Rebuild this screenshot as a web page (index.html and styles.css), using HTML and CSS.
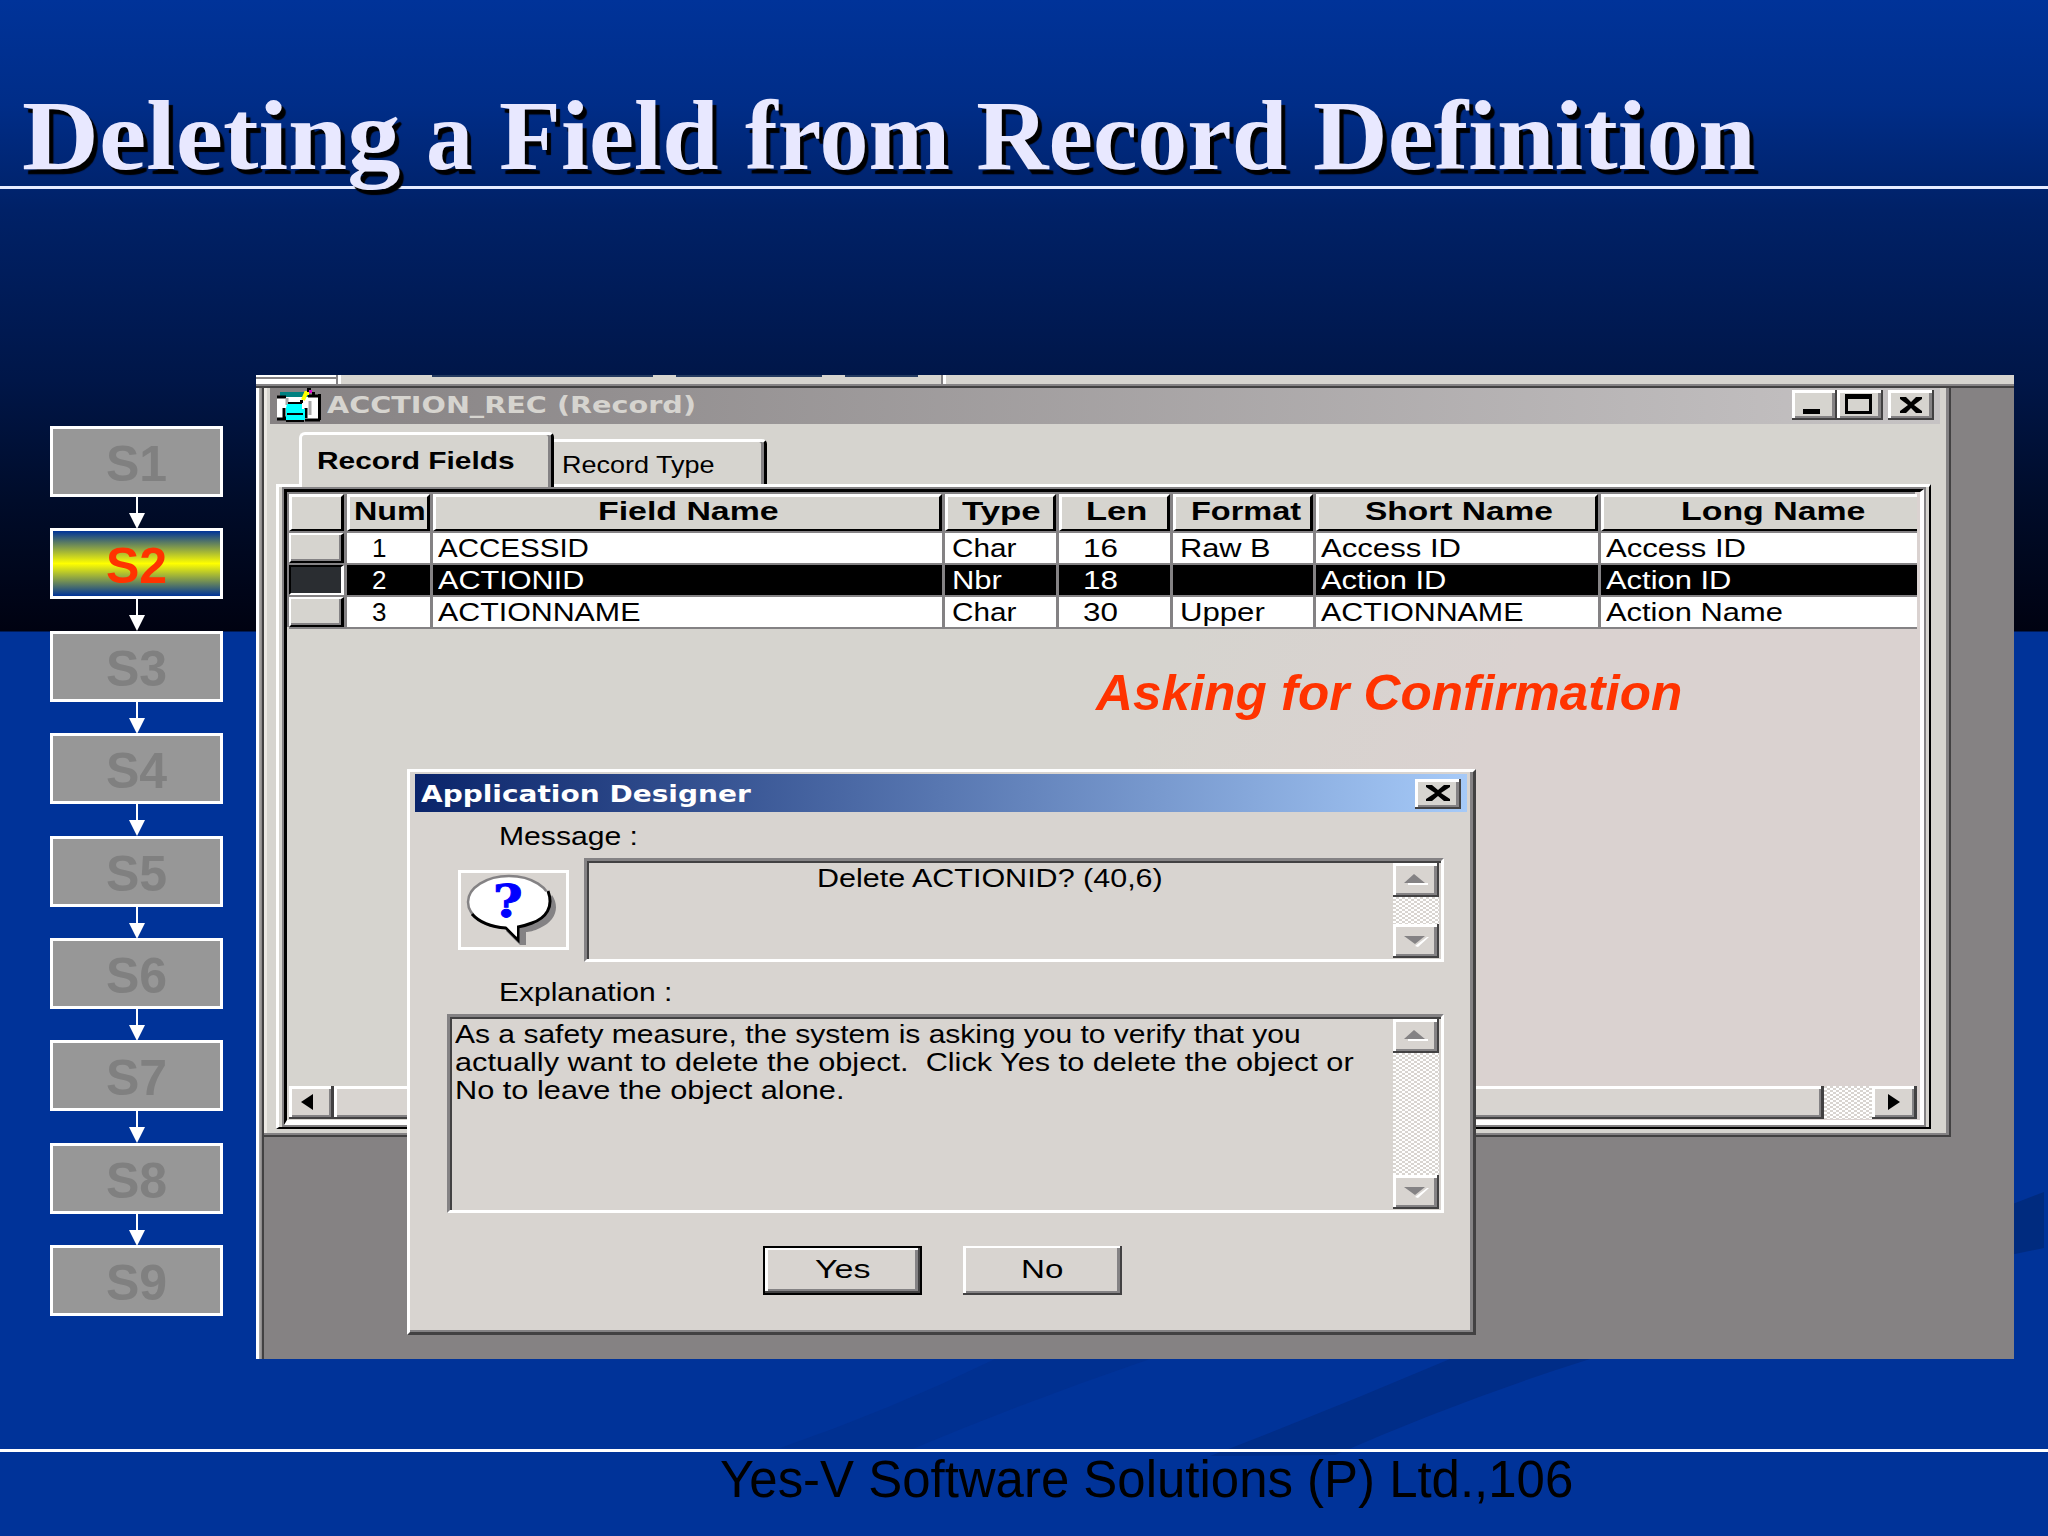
FILE: index.html
```
<!DOCTYPE html>
<html lang="en">
<head>
  <meta charset="utf-8">
  <title>Deleting a Field from Record Definition</title>
  <link rel="stylesheet" href="styles.css">
</head>
<body>
  <svg class="swoosh" width="2048" height="1536" viewBox="0 0 2048 1536">
    <path d="M2010 1205L2044 1192V1248L2010 1255Z" fill="#002b7f"/>
    <path d="M1450 1359H1590Q1460 1400 1335 1455L1210 1456Q1330 1410 1450 1359Z" fill="#002d88"/>
    <path d="M995 1359H1150Q1030 1400 910 1450L780 1448Q890 1410 995 1359Z" fill="#003091"/>
  </svg>

  <header class="slide-title">
    <h1>
      <span class="fit" data-w="378">Deleting</span>
      <span class="fit" data-w="47">a</span>
      <span class="fit" data-w="220">Field</span>
      <span class="fit" data-w="205">from</span>
      <span class="fit" data-w="311">Record</span>
      <span class="fit" data-w="443">Definition</span>
    </h1>
  </header>

  <main class="slide">
    <!-- step navigation -->
    <ol class="steps">
      <li>S1</li>
      <li class="current">S2</li>
      <li>S3</li>
      <li>S4</li>
      <li>S5</li>
      <li>S6</li>
      <li>S7</li>
      <li>S8</li>
      <li>S9</li>
    </ol>

    <section class="shot">
      <div class="strip">
        <i class="piece first"></i>
        <i class="piece second"><b></b><b></b><b></b></i>
        <i class="piece third"></i>
      </div>

      <!-- record window -->
      <div class="record">
        <div class="record-bar">
          <svg class="record-icon" width="45" height="34" viewBox="0 0 45 34">
            <path d="M1 9h43v23H1z" fill="#fff"/>
            <path d="M4 4h28v5H4z" fill="#008080"/>
            <path d="M1 9h9M32 8h11M43.500 6v26M29 32h15M1 31h10M8 20v10h4M30 20v10" stroke="#000" stroke-width="3" fill="none"/>
            <path d="M11 10v7M34 13v14" stroke="#aaa" stroke-width="3"/>
            <path d="M11 16h15v5h3v11H10V20z" fill="#00ffff"/>
            <path d="M11 26h16M10 33h18M12 15h14" stroke="#000" stroke-width="2"/>
            <path d="M27 12l3-7h3" stroke="#ff0" stroke-width="4" fill="none"/>
            <path d="M31 0h4v4h-4zM24 12h3v3h-3zM36 4h3v3h-3z" fill="#000"/>
            <path d="M33 2h3v3h-3z" fill="#d0c"/>
          </svg>
          <span class="record-title fit" data-w="369">ACCTION_REC (Record)</span>
          <div class="win-buttons">
            <span class="win-btn"><svg width="45" height="30"><path d="M11 19h17v5H11z"/></svg></span>
            <span class="win-btn"><svg width="46" height="30"><path d="M8 4h27v20H8zM11 9v12h21V9z" fill-rule="evenodd"/></svg></span>
            <span class="win-btn close"><svg width="46" height="30"><path d="M12 7h6l5 5 5-5h6v2l-8 6 8 6v2h-6l-5-5-5 5h-6v-2l8-6-8-6z"/></svg></span>
          </div>
        </div>

        <div class="tabs">
          <div class="tab active"><span class="fit" data-w="198">Record Fields</span></div>
          <div class="tab"><span class="fit" data-w="153">Record Type</span></div>
        </div>

        <div class="panel">
          <div class="well">
            <div class="grid">
              <div class="th"></div>
              <div class="th num"><span class="fit" data-w="72">Num</span></div>
              <div class="th field"><span class="fit" data-w="181">Field Name</span></div>
              <div class="th type"><span class="fit" data-w="79">Type</span></div>
              <div class="th len"><span class="fit" data-w="61">Len</span></div>
              <div class="th format"><span class="fit" data-w="110">Format</span></div>
              <div class="th short"><span class="fit" data-w="188">Short Name</span></div>
              <div class="th long"><span class="fit" data-w="185">Long Name</span></div>

              <div class="selector"></div>
              <div class="td num">1</div>
              <div class="td name"><span class="fit" data-w="151">ACCESSID</span></div>
              <div class="td"><span class="fit" data-w="64">Char</span></div>
              <div class="td len"><span class="fit" data-w="35">16</span></div>
              <div class="td"><span class="fit" data-w="91">Raw B</span></div>
              <div class="td name"><span class="fit" data-w="140">Access ID</span></div>
              <div class="td name"><span class="fit" data-w="140">Access ID</span></div>

              <div class="selector picked"></div>
              <div class="td num dark">2</div>
              <div class="td name dark"><span class="fit" data-w="146">ACTIONID</span></div>
              <div class="td dark"><span class="fit" data-w="50">Nbr</span></div>
              <div class="td len dark"><span class="fit" data-w="35">18</span></div>
              <div class="td dark"></div>
              <div class="td name dark"><span class="fit" data-w="126">Action ID</span></div>
              <div class="td name dark"><span class="fit" data-w="126">Action ID</span></div>

              <div class="selector"></div>
              <div class="td num">3</div>
              <div class="td name"><span class="fit" data-w="202">ACTIONNAME</span></div>
              <div class="td"><span class="fit" data-w="64">Char</span></div>
              <div class="td len"><span class="fit" data-w="35">30</span></div>
              <div class="td"><span class="fit" data-w="85">Upper</span></div>
              <div class="td name"><span class="fit" data-w="202">ACTIONNAME</span></div>
              <div class="td name"><span class="fit" data-w="177">Action Name</span></div>
            </div>

            <div class="hscroll">
              <span class="hbtn"><svg width="45" height="33"><path d="M12 16L24 8v16z"/></svg></span>
              <span class="thumb"></span>
              <span class="track"></span>
              <span class="hbtn"><svg width="45" height="33"><path d="M16 8v16l12-8z"/></svg></span>
            </div>
          </div>
        </div>
      </div>

      <p class="caption"><span class="fit" data-w="586">Asking for Confirmation</span></p>

      <!-- confirmation dialog -->
      <div class="dialog">
        <div class="dialog-bar">
          <span class="dialog-title fit" data-w="330">Application Designer</span>
          <span class="win-btn dialog-close"><svg width="46" height="30"><path d="M11 6h6l6 5 6-5h6v2l-9 6 9 6v2h-6l-6-5-6 5h-6v-2l9-6-9-6z"/></svg></span>
        </div>
        <div class="label message-label"><span class="fit" data-w="139">Message :</span></div>
        <div class="message-row">
          <div class="bubble">
            <svg width="105" height="74" viewBox="0 0 105 74">
              <path d="M91 22c8 12 4 26-12 33-6 3-11 4-14 4v13h-6l-14-14 30-8z" fill="#848284"/>
              <ellipse cx="48" cy="29" rx="41" ry="26" fill="#fff" stroke="#848284" stroke-width="2.5"/>
              <path d="M87 18c6 16-2 27-16 32-5 2-9 3-14 4v13L45 55C31 54 18 49 11 41" fill="#fff" stroke="#000" stroke-width="3"/>
              <path d="M42 50l14 14V50z" fill="#fff"/>
            </svg>
            <span class="question">?</span>
          </div>
          <div class="sunken message">
            <p><span class="fit" data-w="346">Delete ACTIONID? (40,6)</span></p>
            <div class="vscroll">
              <span class="vbtn"><svg width="44" height="32"><path d="M12 20h20v2H12z" fill="#fff"/><path d="M8 20l10-9 11 9z" fill="#848284"/></svg></span>
              <span class="vbtn"><svg width="44" height="32"><path d="M19 22l12-9h2L22 23z" fill="#fff"/><path d="M8 12h21l-10 8z" fill="#848284"/></svg></span>
            </div>
          </div>
        </div>
        <div class="label explanation-label"><span class="fit" data-w="173">Explanation :</span></div>
        <div class="sunken explanation">
          <p>
            <span class="fit" data-w="846">As a safety measure, the system is asking you to verify that you</span><br>
            <span class="fit" data-w="899">actually want to delete the object.  Click Yes to delete the object or</span><br>
            <span class="fit" data-w="390">No to leave the object alone.</span>
          </p>
          <div class="vscroll">
            <span class="vbtn"><svg width="44" height="32"><path d="M12 20h20v2H12z" fill="#fff"/><path d="M8 20l10-9 11 9z" fill="#848284"/></svg></span>
            <span class="vbtn"><svg width="44" height="32"><path d="M19 22l12-9h2L22 23z" fill="#fff"/><path d="M8 12h21l-10 8z" fill="#848284"/></svg></span>
          </div>
        </div>
        <div class="actions">
          <div class="button default"><span class="fit" data-w="55">Yes</span></div>
          <div class="button"><span class="fit" data-w="42">No</span></div>
        </div>
      </div>
    </section>
  </main>

  <footer class="slide-footer"><span class="fit" data-w="853">Yes-V Software Solutions (P) Ltd.,106</span></footer>

  <script src="script.js"></script>
</body>
</html>
```

FILE: styles.css
```
* {
  box-sizing: border-box;
}

body {
  margin: 0;
  width: 2048px;
  height: 1536px;
  overflow: hidden;
  position: relative;
  font-family: "Liberation Sans", Arial, sans-serif;
  background: linear-gradient(#003399 0, #002d88 105px, #002167 210px, #001648 380px, #000c2a 500px, #000211 631px, #003399 632px);
}

h1,
p,
ol {
  margin: 0;
  padding: 0;
}

.fit {
  display: inline-block;
  white-space: pre;
  transform-origin: left center;
}

.swoosh {
  position: absolute;
  left: 0;
  top: 0;
}

.slide-title {
  position: relative;
  height: 189px;
  padding: 85px 0 0 22px;
  border-bottom: 3px solid #e6ebff;
}

.slide-title h1 {
  display: flex;
  gap: 26px;
  font: bold 100px/102px "Liberation Serif", "Times New Roman", serif;
  font-variant-ligatures: none;
  color: #e8e8ff;
  text-shadow: 4px 5px 1px #000;
}

.slide {
  position: relative;
  display: flex;
  height: 1260px;
  padding: 186px 0 0 50px;
}

/* steps */
.steps {
  width: 173px;
  margin-right: 33px;
  padding-top: 51px;
  list-style: none;
}

.steps li {
  position: relative;
  height: 71px;
  margin-bottom: 31.4px;
  border: 3px solid #fff;
  background: #979797;
  color: #808080;
  font-size: 50px;
  font-weight: bold;
  line-height: 71px;
  text-align: center;
}

.steps .current {
  background: linear-gradient(#003399, #ffff00 50%, #003399);
  color: #ff3300;
}

.steps li:not(:last-child)::before {
  content: "";
  position: absolute;
  left: 83px;
  top: 68px;
  width: 2px;
  height: 20px;
  background: #fff;
}

.steps li:not(:last-child)::after {
  content: "";
  position: absolute;
  left: 76px;
  top: 84px;
  border: 8px solid transparent;
  border-top: 16px solid #fff;
  border-bottom: 0;
}

/* captured desktop */
.shot {
  position: relative;
  width: 1758px;
  height: 984px;
  padding-left: 8px;
  background: linear-gradient(90deg, #fff 3px, #b5b2ad 3px, #848284 6px, #424142 6px, #424142 8px, #858283 8px);
}

.strip {
  display: flex;
  height: 13px;
  margin-left: -8px;
  background: #d6d4cf;
  border-bottom: 2px solid #424142;
  box-shadow: inset 0 -2px #848284;
}

.piece {
  display: flex;
  height: 9px;
}

.piece.first {
  width: 82px;
  background: linear-gradient(#fff 2px, #848284 2px, #848284 4px, #fff 4px);
  border-right: 2px solid #848284;
}

.piece.second {
  width: 605px;
  padding-left: 91px;
  border-right: 2px solid #848284;
  border-left: 3px solid #fff;
}

.piece.second b {
  height: 2px;
  margin-right: 23px;
  width: 148px;
  background: #243a60;
}

.piece.second b:first-child {
  width: 223px;
}

.piece.second b:last-child {
  width: 74px;
}

.piece.third {
  width: 3px;
  background: #fff;
}

.record {
  width: 1687px;
  height: 749px;
  padding-left: 6px;
  background: #d6d4cf;
  border: solid #424142;
  border-width: 0 2px 2px 0;
  box-shadow: inset -3px -2px #848284, inset 3px 0 #ece9e4;
}

.record-bar {
  display: flex;
  width: 1670px;
  height: 36px;
  padding: 0 6px;
  background: linear-gradient(90deg, #868283, #c6c3c4);
}

.record-title {
  margin-left: 6px;
  font: bold 23px/34px "DejaVu Sans", sans-serif;
  color: #d6d4cf;
}

.win-buttons {
  display: flex;
  margin: 2px 0 0 auto;
}

.win-btn {
  height: 30px;
  background: #d6d4cf;
  box-shadow: inset -2px -2px #424142, inset 3px 3px #fff, inset -5px -4px #848284;
}

.win-btn svg,
.hbtn svg,
.vbtn svg {
  display: block;
}

.win-btn.close {
  margin-left: 5px;
}

.tabs {
  display: flex;
  align-items: flex-end;
  height: 60px;
  padding-left: 29px;
}

.tab {
  width: 213px;
  height: 45px;
  padding-left: 8px;
  border-top: 3px solid #fff;
  border-right: 3px solid #000;
  border-radius: 0 5px 0 0;
  box-shadow: inset -3px 0 #848284;
  font-size: 24px;
  line-height: 46px;
}

.tab.active {
  position: relative;
  width: 255px;
  height: 55px;
  margin-bottom: -3px;
  padding-left: 15px;
  border-left: 3px solid #fff;
  border-radius: 6px 5px 0 0;
  background: #d6d4cf;
  font-weight: bold;
  line-height: 51px;
}

.panel {
  width: 1655px;
  height: 645px;
  margin-left: 6px;
  padding: 2px 5px;
  border: solid #fff;
  border-width: 3px 2px 2px 3px;
  border-right-color: #000;
  border-bottom-color: #000;
}

.well {
  display: flex;
  flex-direction: column;
  height: 636px;
  padding: 2px 3px 1px 2px;
  border: solid #fff;
  border-width: 3px 4px 5px 3px;
  border-top-color: #000;
  border-left-color: #000;
  box-shadow: 0 0 0 2px #848284;
  background: linear-gradient(115deg, #d6d4cf 50%, #dad2d0 68%);
}

.grid {
  display: grid;
  grid-template-columns: 55px 83px 509px 111px 111px 140px 282px 316px;
  grid-template-rows: 37px 30px 30px 30px;
  gap: 2px 3px;
  background: #848284;
  border-bottom: 2px solid #848284;
  box-shadow: -2px -2px #848284;
}

.th {
  background: #d6d4cf;
  border: solid #000;
  border-width: 3px 3px 2px 3px;
  border-top-color: #fff;
  border-left-color: #fff;
  font-size: 26px;
  font-weight: bold;
  line-height: 29px;
  overflow: hidden;
}

.th:nth-child(8) {
  border-right: 0;
}

.th.num { padding-left: 4px; }
.th.field { padding-left: 162px; }
.th.type { padding-left: 14px; }
.th.len { padding-left: 24px; }
.th.format { padding-left: 15px; }
.th.short { padding-left: 46px; }
.th.long { padding-left: 77px; }

.td {
  padding-left: 7px;
  background: #fff;
  font-size: 26px;
  line-height: 30px;
}

.td.name {
  padding-left: 5px;
}

.td.num {
  padding-left: 25px;
}

.td.len {
  padding-left: 24px;
}

.td.dark {
  background: #000;
  color: #fff;
}

.selector {
  background: #d6d4cf;
  border: solid #000;
  border-width: 2px 3px 2px 2px;
  border-top-color: #fff;
  border-left-color: #fff;
  box-shadow: inset -2px -2px #848284;
}

.selector.picked {
  background: #2a2d31;
  border-color: #000 #fff #fff #000;
  box-shadow: none;
}

.hscroll {
  display: flex;
  height: 33px;
  margin-top: auto;
}

.hbtn,
.thumb {
  width: 45px;
  background: #d8d4d0;
  box-shadow: inset -3px -2px #424142, inset 3px 3px #fff, inset -5px -4px #848284;
}

.thumb {
  flex: 1;
}

.track {
  width: 48px;
  background: repeating-conic-gradient(#fff 0 25%, #d8d4d0 0 50%) 0 0 / 6px 4px;
}

.caption {
  position: absolute;
  left: 840px;
  top: 290px;
  font-size: 50px;
  font-weight: bold;
  font-style: italic;
  line-height: 56px;
  color: #ff3300;
}

/* dialog */
.dialog {
  position: absolute;
  left: 151px;
  top: 394px;
  width: 1069px;
  height: 566px;
  padding: 2px 5px;
  background: #d8d4d0;
  border: 3px solid #fff;
  border-right-color: #424142;
  border-bottom-color: #424142;
  box-shadow: inset -3px -2px #848284;
}

.dialog-bar {
  display: flex;
  justify-content: space-between;
  width: 1052px;
  height: 38px;
  padding: 5px 6px;
  background: linear-gradient(90deg, #0a246a, #a6caf8);
}

.dialog-title {
  font: bold 23px/30px "DejaVu Sans", sans-serif;
  color: #fff;
}

.label {
  height: 32px;
  margin: 8px 0 6px 84px;
  font-size: 26px;
  line-height: 32px;
}

.explanation-label {
  margin: 14px 0 6px 84px;
}

.message-row {
  display: flex;
}

.bubble {
  position: relative;
  width: 111px;
  height: 80px;
  margin: 12px 15px 0 43px;
  border: 3px solid #fff;
}

.question {
  position: absolute;
  left: 34px;
  top: 6px;
  font: bold 44px/46px "DejaVu Serif", serif;
  color: #0000ff;
  -webkit-text-stroke: 1px #0000ff;
  transform: scaleX(1.15);
}

.sunken {
  display: flex;
  justify-content: space-between;
  width: 860px;
  height: 104px;
  padding-right: 2px;
  border: 3px solid #fff;
  border-top-color: #848284;
  border-left-color: #848284;
  box-shadow: inset 2px 2px #424142;
  font-size: 26px;
}

.message p {
  padding: 1px 0 0 230px;
  line-height: 32px;
}

.explanation {
  width: 997px;
  height: 199px;
  margin-left: 32px;
}

.explanation p {
  padding: 3px 0 0 5px;
  line-height: 28px;
  white-space: nowrap;
}

.vscroll {
  display: flex;
  flex-direction: column;
  justify-content: space-between;
  width: 46px;
  margin: 2px 0 1px auto;
  background: repeating-conic-gradient(#fff 0 25%, #d8d4d0 0 50%) 0 0 / 6px 4px;
}

.vbtn {
  height: 34px;
  padding-left: 3px;
  background: #d8d4d0;
  box-shadow: inset -2px -2px #424142, inset 3px 3px #fff, inset -5px -4px #848284;
}

.actions {
  display: flex;
  gap: 41px;
  margin: 33px 0 0 348px;
}

.button {
  width: 159px;
  height: 49px;
  font-size: 26px;
  line-height: 46px;
  text-align: center;
  box-shadow: inset -2px -2px #424142, inset 3px 2px #fff, inset -5px -4px #848284;
}

.button.default {
  border: 2px solid #000;
  line-height: 42px;
}

.slide-footer {
  position: relative;
  height: 87px;
  padding: 1px 0 0 720px;
  border-top: 3px solid #fff;
  font-size: 51px;
  line-height: 53px;
  color: #000;
}
```

FILE: script.js
```
document.querySelectorAll('.fit').forEach(function(el) {
  var w = Number(el.dataset.w);
  var natural = el.offsetWidth;
  el.style.transform = 'scaleX(' + (w / natural) + ')';
  el.style.marginRight = (w - natural) + 'px';
});
```
